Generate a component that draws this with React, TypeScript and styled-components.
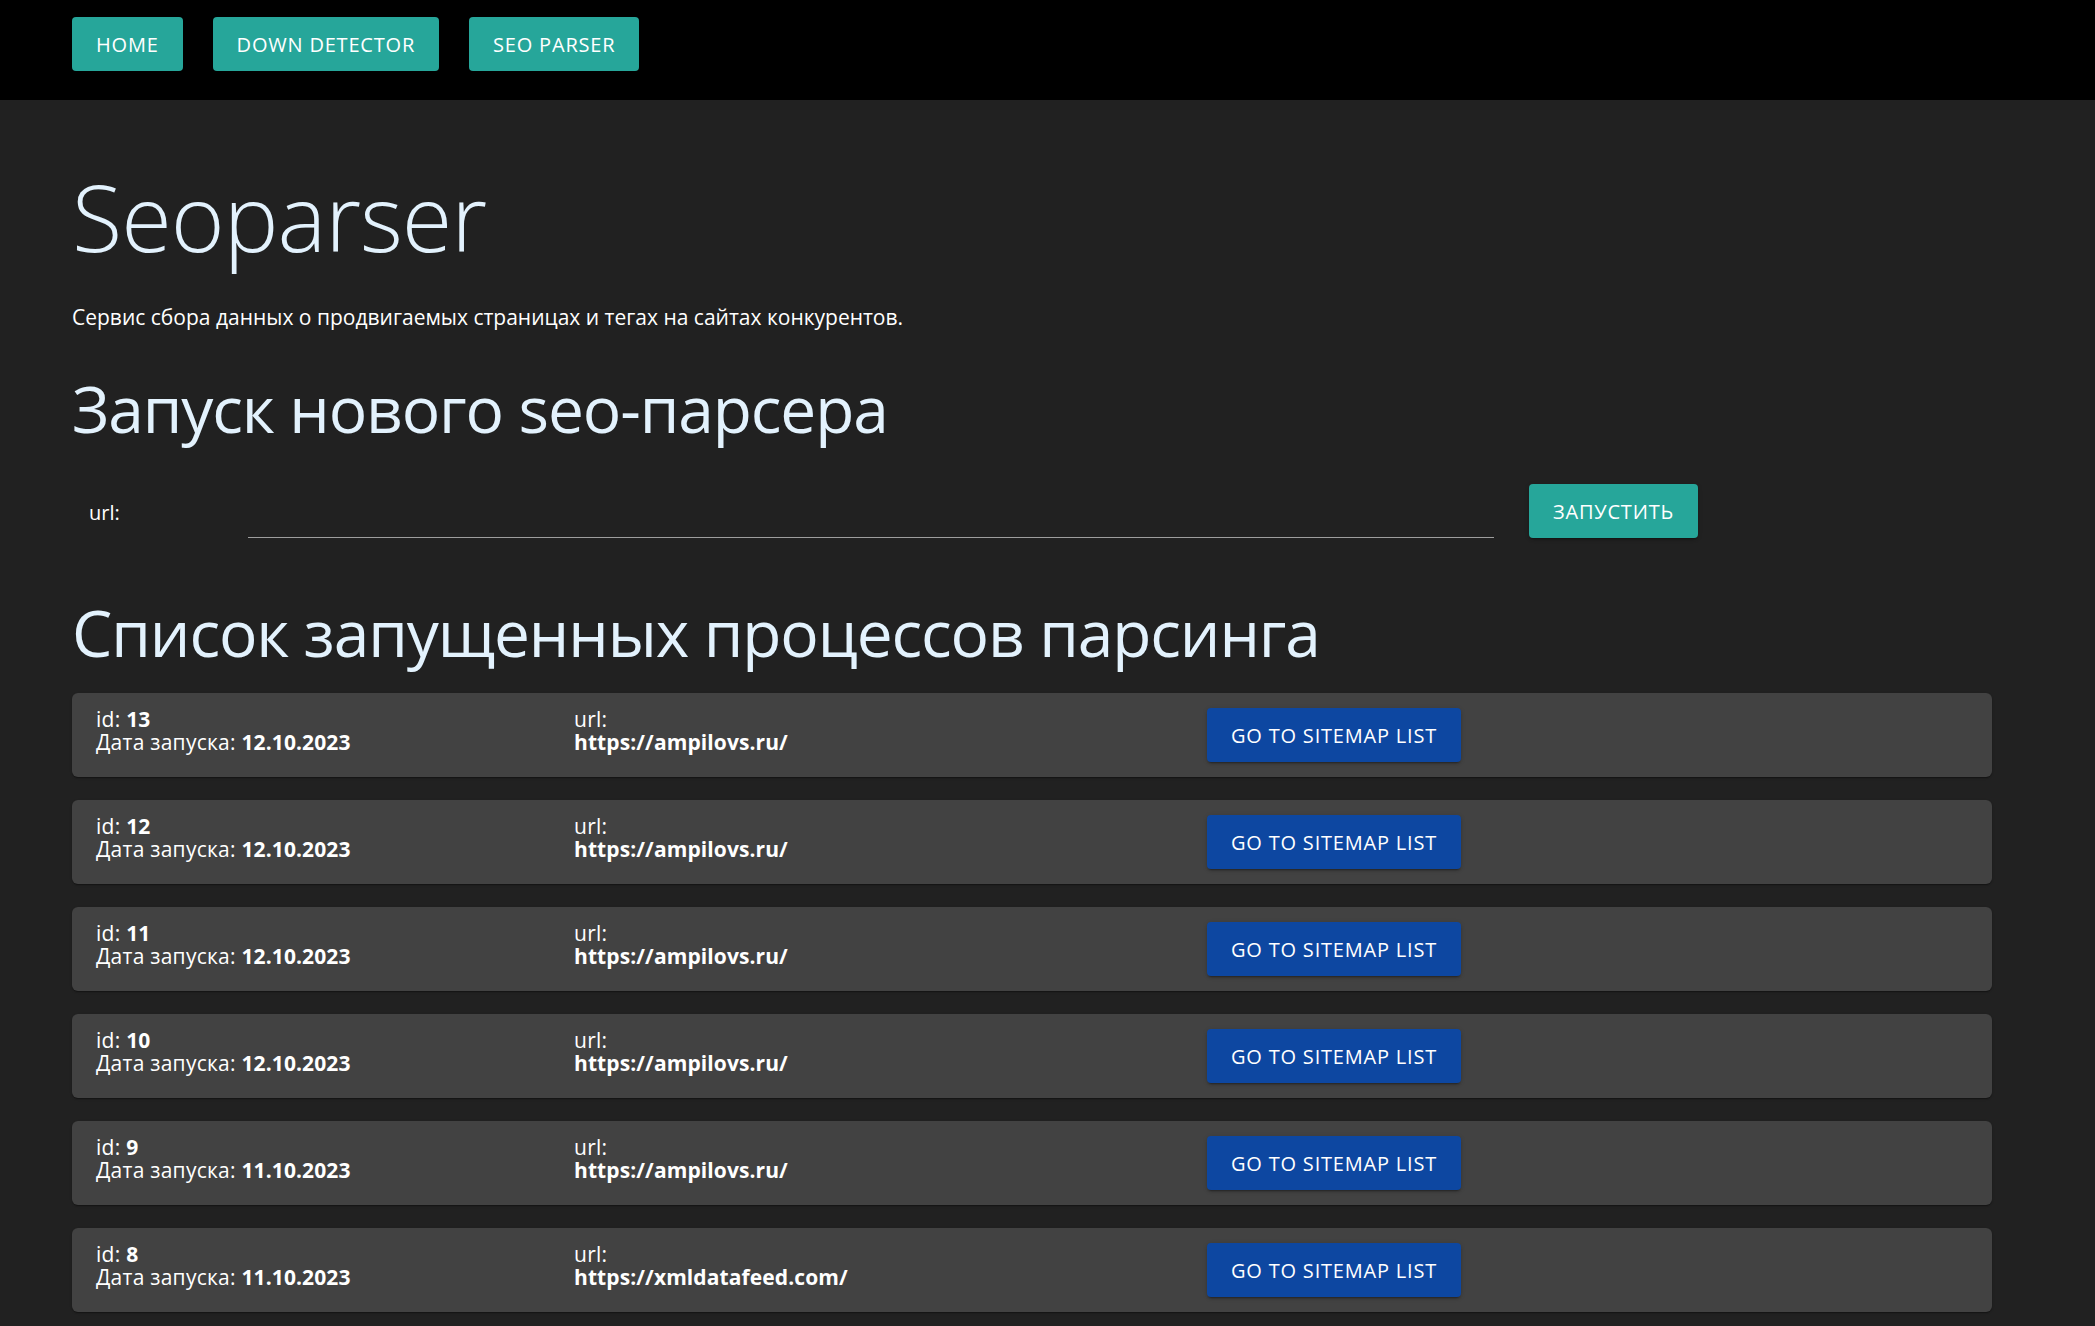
import React from "react";
import styled, { createGlobalStyle } from "styled-components";

const GlobalStyle = createGlobalStyle`
  html, body { margin: 0; padding: 0; background: #212121; }
  body { font-family: "Open Sans", "Noto Sans", sans-serif; color: #ffffff; }
  * { box-sizing: border-box; }
`;

const NavBar = styled.nav`
  background: #000000;
  height: 100px;
  padding: 17px 72px 0;
  display: flex;
  gap: 30px;
  align-items: flex-start;
`;

const Button = styled.button<{ $tone?: "teal" | "blue" }>`
  height: 54px;
  padding: 0 24px;
  border: none;
  border-radius: 4px;
  background: ${(p) => (p.$tone === "blue" ? "#0d47a1" : "#26a69a")};
  color: #ffffff;
  font-family: inherit;
  font-size: 20px;
  font-weight: 400;
  letter-spacing: 0.8px;
  text-transform: uppercase;
  white-space: nowrap;
  box-shadow: 0 3px 1px -2px rgba(0, 0, 0, 0.2), 0 2px 2px 0 rgba(0, 0, 0, 0.14),
    0 1px 5px 0 rgba(0, 0, 0, 0.12);
  cursor: pointer;
`;

const Main = styled.main`
  padding: 0 103px 17px 72px;
`;

const Title = styled.h1`
  margin: 71px 0 0;
  font-size: 92px;
  line-height: 92px;
  font-weight: 300;
  letter-spacing: -1px;
  color: #e3f2fd;
`;

const Lead = styled.p`
  margin: 39px 0 0;
  font-size: 21px;
  line-height: 31.5px;
`;

const Heading = styled.h2<{ $gap: number }>`
  margin: ${(p) => p.$gap}px 0 0;
  font-size: 64px;
  line-height: 66px;
  font-weight: 400;
  letter-spacing: -1.1px;
  color: #e3f2fd;
`;

const FormRow = styled.form`
  margin-top: 42px;
  display: grid;
  grid-template-columns: 141px 1246px auto;
  column-gap: 35px;
  align-items: center;
  height: 54px;
`;

const Label = styled.label`
  padding-left: 17px;
  margin-top: 3px;
  font-size: 20px;
  line-height: 24px;
`;

const UrlInput = styled.input`
  height: 54px;
  border: none;
  border-bottom: 1px solid #9e9e9e;
  background: transparent;
  color: #ffffff;
  font-family: inherit;
  font-size: 20px;
  outline: none;
`;

const RunButton = styled(Button)`
  justify-self: start;
`;

const List = styled.div`
  margin-top: 27px;
  display: flex;
  flex-direction: column;
  gap: 23px;
`;

const Card = styled.div`
  background: #424242;
  border-radius: 6px;
  padding: 15px 24px;
  display: grid;
  grid-template-columns: 478px 633px auto;
  align-items: start;
  box-shadow: 0 2px 1px -1px rgba(0, 0, 0, 0.2), 0 1px 1px 0 rgba(0, 0, 0, 0.14),
    0 1px 3px 0 rgba(0, 0, 0, 0.12);
`;

const Info = styled.div`
  font-size: 21px;
  line-height: 23px;
  letter-spacing: 0.25px;
  color: #ffffff;
`;

const Line = styled.div``;

const Strong = styled.b`
  font-weight: 700;
  letter-spacing: 0.1px;
`;

const SitemapButton = styled(Button)`
  justify-self: start;
`;

const items = [
  { id: 13, date: "12.10.2023", url: "https://ampilovs.ru/" },
  { id: 12, date: "12.10.2023", url: "https://ampilovs.ru/" },
  { id: 11, date: "12.10.2023", url: "https://ampilovs.ru/" },
  { id: 10, date: "12.10.2023", url: "https://ampilovs.ru/" },
  { id: 9, date: "11.10.2023", url: "https://ampilovs.ru/" },
  { id: 8, date: "11.10.2023", url: "https://xmldatafeed.com/" },
];

export default function App() {
  return (
    <>
      <GlobalStyle />
      <NavBar>
        <Button>Home</Button>
        <Button>Down detector</Button>
        <Button>Seo parser</Button>
      </NavBar>
      <Main>
        <Title>Seoparser</Title>
        <Lead>Сервис сбора данных о продвигаемых страницах и тегах на сайтах конкурентов.</Lead>
        <Heading $gap={42.5}>Запуск нового seo-парсера</Heading>
        <FormRow onSubmit={(e) => e.preventDefault()}>
          <Label htmlFor="url">url:</Label>
          <UrlInput id="url" />
          <RunButton type="submit">Запустить</RunButton>
        </FormRow>
        <Heading $gap={62}>Список запущенных процессов парсинга</Heading>
        <List>
          {items.map((it) => (
            <Card key={it.id}>
              <Info>
                <Line>
                  id: <Strong>{it.id}</Strong>
                </Line>
                <Line>
                  Дата запуска: <Strong>{it.date}</Strong>
                </Line>
              </Info>
              <Info>
                <Line>url:</Line>
                <Line>
                  <Strong>{it.url}</Strong>
                </Line>
              </Info>
              <SitemapButton $tone="blue">Go to sitemap list</SitemapButton>
            </Card>
          ))}
        </List>
      </Main>
    </>
  );
}
